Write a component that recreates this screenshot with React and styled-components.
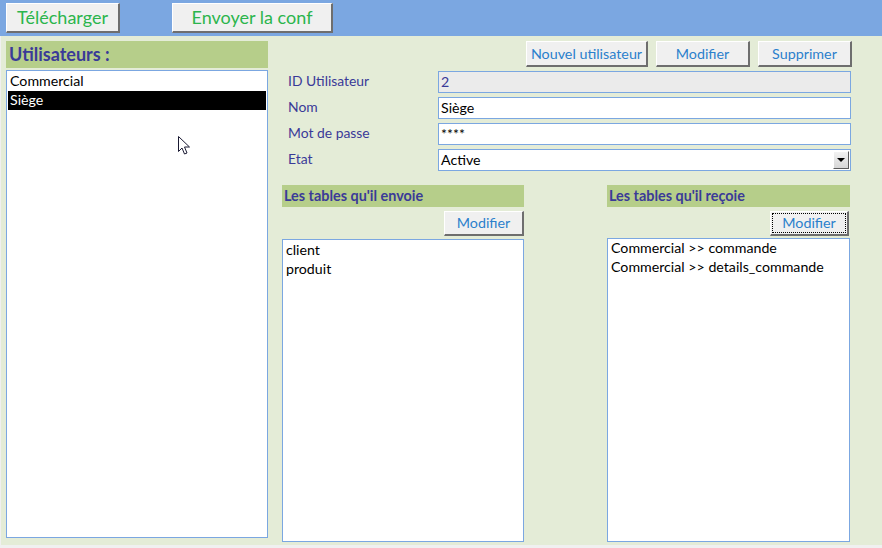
import React from "react";
import styled, { createGlobalStyle } from "styled-components";

const Global = createGlobalStyle`
  html, body { margin: 0; padding: 0; background: #f0f0f0; }
  body { font-family: Lato, "Open Sans", "Liberation Sans", sans-serif; }
  * { box-sizing: border-box; }
`;

const Screen = styled.div`
  width: 882px;
  height: 548px;
  overflow: hidden;
  position: relative;
  background: #f0f0f0;
  display: flex;
  flex-direction: column;
`;

const TopBar = styled.div`
  height: 36px;
  background: #7ba7e1;
  display: flex;
  align-items: flex-start;
  padding: 3px 0 0 6px;
  gap: 52px;
`;

const RaisedButton = styled.button`
  font-family: Lato, "Open Sans", "Liberation Sans", sans-serif;
  background: #f0f0f0;
  border-style: solid;
  border-width: 1px 2px 2px 1px;
  border-color: #ffffff #6e6e6e #6e6e6e #ffffff;
  padding: 0 0 1px 0;
  margin: 0;
  cursor: default;
  display: flex;
  align-items: center;
  justify-content: center;
  position: relative;
`;

const BigButton = styled(RaisedButton)`
  width: ${(p) => p.$w}px;
  height: 30px;
  color: #2bb54c;
  font-size: 18px;
`;

const SmallButton = styled(RaisedButton)`
  width: ${(p) => p.$w}px;
  height: ${(p) => p.$h || 26}px;
  color: #2b80cc;
  font-size: 14.3px;
  ${(p) =>
    p.$focused &&
    `
    &::after {
      content: "";
      position: absolute;
      inset: 1px;
      border: 1px dotted #000;
    }
  `}
`;

const Main = styled.div`
  height: 509px;
  background: #e4ecd7;
  border-left: 1px solid #f0f0f0;
  display: flex;
  padding: 5px 0 0 5px;
`;

const LeftCol = styled.div`
  width: 262px;
  display: flex;
  flex-direction: column;
  gap: 2px;
`;

const Header = styled.div`
  height: ${(p) => p.$h}px;
  background: #b6ce8a;
  color: #3a3a98;
  font-weight: 700;
  font-size: ${(p) => p.$fs}px;
  display: flex;
  align-items: center;
  padding: 0 0 2px ${(p) => p.$pl}px;
`;

const ListBox = styled.div`
  background: #fff;
  border: 1px solid #7ba7e1;
  height: ${(p) => p.$h}px;
  padding: ${(p) => p.$pad || "1px"};
  display: flex;
  flex-direction: column;
`;

const ListItem = styled.div`
  height: ${(p) => p.$h || 19}px;
  line-height: ${(p) => (p.$h || 19) - 2}px;
  font-size: 14.2px;
  padding-left: 2px;
  color: ${(p) => (p.$selected ? "#fff" : "#000")};
  background: ${(p) => (p.$selected ? "#000" : "transparent")};
`;

const RightCol = styled.div`
  width: 570px;
  margin-left: 14px;
  display: flex;
  flex-direction: column;
`;

const ButtonRow = styled.div`
  display: flex;
  justify-content: flex-end;
  gap: 8px;
  height: 26px;
`;

const Fields = styled.div`
  margin-top: 4px;
  display: flex;
  flex-direction: column;
  gap: 4px;
`;

const FieldRow = styled.div`
  display: grid;
  grid-template-columns: 156px 413px;
  height: 22px;
  align-items: center;
`;

const Label = styled.div`
  color: #3a3a98;
  font-size: 13.9px;
  padding: 0 0 3px 6px;
`;

const Input = styled.div`
  height: 22px;
  border: 1px solid #7ba7e1;
  background: ${(p) => (p.$disabled ? "#ebebeb" : "#fff")};
  color: ${(p) => (p.$disabled ? "#3a3a98" : "#000")};
  font-size: 14.2px;
  display: flex;
  align-items: center;
  padding: 0 0 2px 2px;
  position: relative;
`;

const DropButton = styled.div`
  position: absolute;
  right: 1px;
  top: 1px;
  width: 16px;
  height: 18px;
  background: linear-gradient(#f2f2f2, #d6d6d6);
  border: 1px solid;
  border-color: #ffffff #5a5a5a #5a5a5a #ffffff;
  display: flex;
  align-items: center;
  justify-content: center;
`;

const Triangle = styled.div`
  width: 0;
  height: 0;
  border-left: 4px solid transparent;
  border-right: 4px solid transparent;
  border-top: 4px solid #000;
`;

const Sections = styled.div`
  margin-top: 14px;
  display: flex;
  gap: 83px;
`;

const Section = styled.div`
  width: ${(p) => p.$w}px;
  display: flex;
  flex-direction: column;
`;

const SectionButtonRow = styled.div`
  display: flex;
  justify-content: flex-end;
  margin-top: 4px;
  padding-right: ${(p) => p.$pr || 0}px;
`;

const SectionList = styled.div`
  margin-top: ${(p) => p.$mt}px;
`;

const BottomStrip = styled.div`
  flex: 1;
  background: #f0f0f0;
`;

const Cursor = styled.svg`
  position: absolute;
  left: 178px;
  top: 136px;
`;

export default function App() {
  return (
    <>
      <Global />
      <Screen>
        <TopBar>
          <BigButton $w={114}>Télécharger</BigButton>
          <BigButton $w={161}>Envoyer la conf</BigButton>
        </TopBar>
        <Main>
          <LeftCol>
            <Header $h={27} $fs={18} $pl={3}>Utilisateurs :</Header>
            <ListBox $h={468}>
              <ListItem>Commercial</ListItem>
              <ListItem $selected>Siège</ListItem>
            </ListBox>
          </LeftCol>
          <RightCol>
            <ButtonRow>
              <SmallButton $w={122}>Nouvel utilisateur</SmallButton>
              <SmallButton $w={94}>Modifier</SmallButton>
              <SmallButton $w={94}>Supprimer</SmallButton>
            </ButtonRow>
            <Fields>
              <FieldRow>
                <Label>ID Utilisateur</Label>
                <Input $disabled>2</Input>
              </FieldRow>
              <FieldRow>
                <Label>Nom</Label>
                <Input>Siège</Input>
              </FieldRow>
              <FieldRow>
                <Label>Mot de passe</Label>
                <Input>****</Input>
              </FieldRow>
              <FieldRow>
                <Label>Etat</Label>
                <Input>
                  Active
                  <DropButton>
                    <Triangle />
                  </DropButton>
                </Input>
              </FieldRow>
            </Fields>
            <Sections>
              <Section $w={242}>
                <Header $h={22} $fs={14.4} $pl={2}>Les tables qu'il envoie</Header>
                <SectionButtonRow>
                  <SmallButton $w={80} $h={25}>Modifier</SmallButton>
                </SectionButtonRow>
                <SectionList $mt={3}>
                  <ListBox $h={303} $pad="1px 0 0 1px">
                    <ListItem $h={19}>client</ListItem>
                    <ListItem $h={19}>produit</ListItem>
                  </ListBox>
                </SectionList>
              </Section>
              <Section $w={243}>
                <Header $h={22} $fs={14.4} $pl={2}>Les tables qu'il reçoie</Header>
                <SectionButtonRow $pr={1}>
                  <SmallButton $w={79} $h={25} $focused>Modifier</SmallButton>
                </SectionButtonRow>
                <SectionList $mt={2}>
                  <ListBox $h={304} $pad="0 0 0 1px">
                    <ListItem $h={19}>Commercial &gt;&gt; commande</ListItem>
                    <ListItem $h={19}>Commercial &gt;&gt; details_commande</ListItem>
                  </ListBox>
                </SectionList>
              </Section>
            </Sections>
          </RightCol>
        </Main>
        <BottomStrip />
        <Cursor width="13" height="20" viewBox="0 0 13 20">
          <path
            d="M0.5 0.5 L0.5 15.5 L4 12 L6.5 18 L9 17 L6.5 11 L11.5 11 Z"
            fill="#fff"
            stroke="#1a1a33"
            strokeWidth="1"
            strokeLinejoin="miter"
          />
        </Cursor>
      </Screen>
    </>
  );
}
